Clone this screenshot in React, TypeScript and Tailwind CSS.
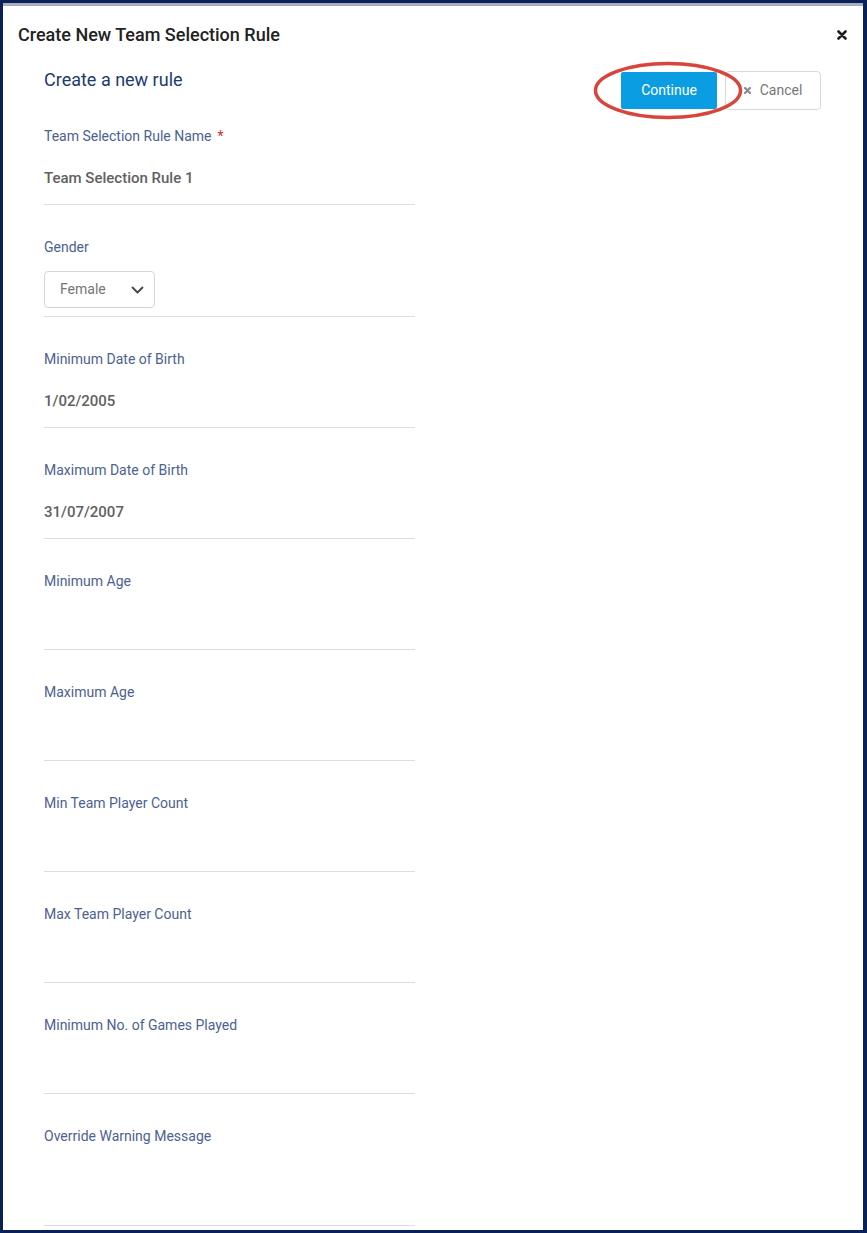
import React from "react";

type Field = {
  label: string;
  value?: string;
  required?: boolean;
  kind?: "text" | "select" | "area";
};

const fields: Field[] = [
  { label: "Team Selection Rule Name", value: "Team Selection Rule 1", required: true },
  { label: "Gender", value: "Female", kind: "select" },
  { label: "Minimum Date of Birth", value: "1/02/2005" },
  { label: "Maximum Date of Birth", value: "31/07/2007" },
  { label: "Minimum Age" },
  { label: "Maximum Age" },
  { label: "Min Team Player Count" },
  { label: "Max Team Player Count" },
  { label: "Minimum No. of Games Played" },
  { label: "Override Warning Message", kind: "area" },
];

function FormField({ field }: { field: Field }) {
  return (
    <div className="border-b border-[#dcdde6] pt-[34px]">
      <label className="flex h-4 items-center text-[14px] leading-4 text-[#4d6191]">
        {field.label}
        {field.required && <span className="ml-[6px] text-[#e0262b]">*</span>}
      </label>
      {field.kind === "select" ? (
        <div className="mt-4 mb-[8px] flex h-[37px] w-[111px] items-center justify-between rounded-[4px] border border-[#d6d6d6] pr-[10px] pl-[15px]">
          <span className="text-[14px] text-[#757575]">{field.value}</span>
          <svg width="13" height="8" viewBox="0 0 13 8" fill="none">
            <path d="M1.5 1.5l5 5 5-5" stroke="#444" strokeWidth="1.8" strokeLinecap="round" strokeLinejoin="round" />
          </svg>
        </div>
      ) : field.kind === "area" ? (
        <div className="h-[81px]" />
      ) : (
        <div className="mt-6 mb-[16px] h-5 text-[15px] leading-5 font-medium text-[#616161]">{field.value}</div>
      )}
    </div>
  );
}

export default function App() {
  return (
    <div
      className="relative h-[1233px] w-[867px] overflow-hidden border-t-[3px] border-r-[4px] border-b-[3px] border-l-[3px] border-[#0a2158] bg-white"
      style={{ fontFamily: "Roboto, 'Liberation Sans', sans-serif" }}
    >
      <div className="h-[3px] bg-[#a9adbc]" />
      <div className="flex items-center justify-between pt-[18px] pr-[16px] pl-[15px]">
        <h2 className="text-[18px] leading-[22px] font-medium text-[#222]">Create New Team Selection Rule</h2>
        <svg width="10" height="10" viewBox="0 0 10 10">
          <path d="M1.5 1.5l7 7M8.5 1.5l-7 7" stroke="#1e1e1e" strokeWidth="2.6" strokeLinecap="round" />
        </svg>
      </div>

      <div className="mt-[23px] flex items-start justify-between pr-[42px] pl-[41px]">
        <div className="w-[371px]">
          <h3 className="text-[18px] leading-[22px] text-[#1d3a6f]">Create a new rule</h3>
          <div className="mt-[3px]">
            {fields.map((f) => (
              <FormField key={f.label} field={f} />
            ))}
          </div>
        </div>

        <div className="relative mt-[2px] flex items-center gap-2">
          <button className="h-[37px] w-[96px] rounded-[2px] bg-[#0a9de1] text-[14px] text-white">Continue</button>
          <button className="flex h-[39px] w-[96px] items-center justify-center gap-[9px] rounded-[4px] border border-[#d9d9d9] bg-white text-[14px] text-[#777]">
            <svg width="7" height="7" viewBox="0 0 7 7">
              <path d="M1 1l5 5M6 1l-5 5" stroke="#8a8a8a" strokeWidth="2.2" strokeLinecap="round" />
            </svg>
            Cancel
          </button>
          <svg className="pointer-events-none absolute -top-[10px] -left-[28px]" width="152" height="60" viewBox="0 0 152 60">
            <ellipse cx="75" cy="29.5" rx="72.5" ry="27" fill="none" stroke="#d8453d" strokeWidth="3.5" />
          </svg>
        </div>
      </div>
    </div>
  );
}
